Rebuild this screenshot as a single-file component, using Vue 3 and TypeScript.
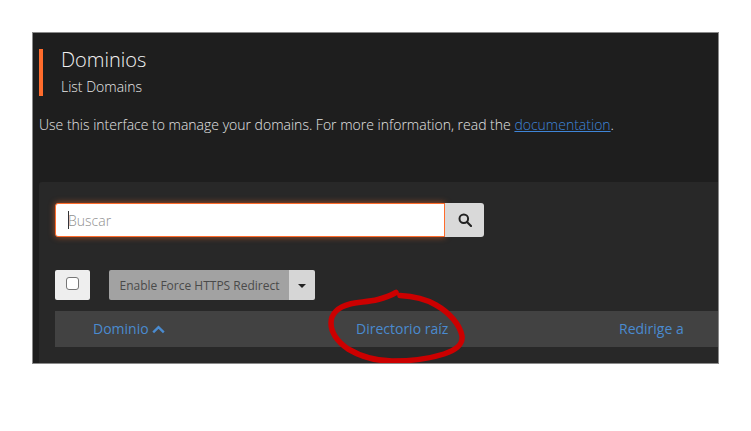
<script setup lang="ts">
const columns: { label: string; sorted?: boolean }[] = [
  { label: 'Dominio', sorted: true },
  { label: 'Directorio raíz' },
  { label: 'Redirige a' },
]
</script>

<template>
  <div class="page">
    <div class="frame">
      <header class="heading">
        <h1 class="title">Dominios</h1>
        <p class="subtitle">List Domains</p>
      </header>
      <p class="intro">
        Use this interface to manage your domains. For more information, read the
        <a class="doc-link">documentation</a>.
      </p>
      <section class="panel">
        <div class="search">
          <div class="search-input">
            <span class="caret"></span>
            <span class="placeholder">Buscar</span>
          </div>
          <button class="search-btn" aria-label="Buscar">
            <svg width="14" height="14" viewBox="0 0 14 14" fill="none">
              <circle cx="5.8" cy="5.8" r="4.3" stroke="#222" stroke-width="2" />
              <path d="M9 9l4 4" stroke="#222" stroke-width="2.2" stroke-linecap="round" />
            </svg>
          </button>
        </div>
        <div class="actions">
          <div class="check-btn"><span class="check"></span></div>
          <div class="split">
            <span class="split-main">Enable Force HTTPS Redirect</span>
            <span class="split-caret"><i class="tri"></i></span>
          </div>
        </div>
        <div class="thead">
          <div v-for="c in columns" :key="c.label" class="th">
            <span>{{ c.label }}</span>
            <svg v-if="c.sorted" class="chev" width="13" height="9" viewBox="0 0 13 9" fill="none">
              <path d="M1.2 7.4L6.5 2.2l5.300 5.200" stroke="#4a8bd0" stroke-width="2.4" />
            </svg>
          </div>
        </div>
      </section>
      <svg class="scribble" width="687" height="332" viewBox="32 32 687 332" fill="none">
        <path
          d="M396 292.500C390 296 384 298 378 299.500C368 302 358 302 350 304C338 307 331 314 331 323C331 333 338 342 348 349C360 356 376 361 392 361C410 361 428 359 444 354C456 350 463 345 462 336C460 325 450 313 436 305C424 298 412 296 400 295.500"
          stroke="#cc0000"
          stroke-width="5.500"
          stroke-linecap="round"
        />
      </svg>
    </div>
  </div>
</template>

<style>
html,
body {
  margin: 0;
  background: #fff;
}
</style>

<style scoped>
.page {
  width: 751px;
  height: 431px;
  padding: 32px 0 0 32px;
  box-sizing: border-box;
  background: #fff;
  overflow: hidden;
  font-family: "Open Sans", "Liberation Sans", sans-serif;
}
.frame {
  position: relative;
  width: 687px;
  height: 332px;
  box-sizing: border-box;
  border: 1px solid #8a8a8a;
  background: #1e1e1e;
  padding: 16px 0 0 6px;
  overflow: hidden;
  color: #e8e8e8;
}
.heading {
  height: 47px;
  border-left: 4px solid #ff6c2c;
  padding-left: 18px;
  box-sizing: border-box;
}
.title {
  margin: 0;
  font-size: 20px;
  font-weight: 300;
  line-height: 22px;
  color: #f2f2f2;
}
.subtitle {
  margin: 7px 0 0;
  font-size: 14px;
  font-weight: 300;
  line-height: 18px;
}
.intro {
  margin: 19px 0 0;
  font-size: 14px;
  font-weight: 300;
  line-height: 20px;
  color: #e4e4e4;
}
.doc-link {
  color: #3f85d8;
  text-decoration: underline;
}
.panel {
  margin-top: 47px;
  height: 200px;
  background: #282828;
  border-radius: 3px 0 0 0;
  padding: 21px 0 0 16px;
}
.search {
  display: flex;
  width: 429px;
  height: 34px;
}
.search-input {
  flex: 1;
  display: flex;
  align-items: center;
  box-sizing: border-box;
  background: #fff;
  border: 1px solid #ff6c2c;
  border-radius: 3px 0 0 3px;
  box-shadow: 0 0 6px rgba(255, 108, 44, 0.6);
  padding-left: 12px;
}
.caret {
  width: 1px;
  height: 18px;
  background: #333;
}
.placeholder {
  font-size: 14px;
  font-weight: 300;
  color: #8f8f8f;
  margin-left: -1px;
}
.search-btn {
  width: 39px;
  border: 0;
  padding: 0;
  background: #d9d9d9;
  border-radius: 0 3px 3px 0;
  display: flex;
  align-items: center;
  justify-content: center;
}
.actions {
  display: flex;
  gap: 19px;
  margin-top: 33px;
  height: 30px;
}
.check-btn {
  width: 35px;
  height: 30px;
  background: #eee;
  border-radius: 2px;
  display: flex;
  align-items: center;
  justify-content: center;
}
.check {
  width: 13px;
  height: 13px;
  box-sizing: border-box;
  background: #fff;
  border: 1px solid #767676;
  border-radius: 3px;
  margin-top: -4px;
}
.split {
  display: flex;
  width: 206px;
  height: 30px;
  border-radius: 2px;
  overflow: hidden;
}
.split-main {
  width: 180px;
  padding-left: 1px;
  box-sizing: border-box;
  background: #a2a2a2;
  color: #4a4a4a;
  font-size: 12px;
  line-height: 31px;
  text-align: center;
}
.split-caret {
  flex: 1;
  background: #d6d6d6;
  display: flex;
  align-items: center;
  justify-content: center;
  padding-top: 2px;
  box-sizing: border-box;
}
.tri {
  display: block;
  border-left: 4px solid transparent;
  border-right: 4px solid transparent;
  border-top: 4px solid #222;
}
.thead {
  display: flex;
  margin-top: 11px;
  height: 36px;
  background: #424242;
  align-items: center;
  color: #4a8bd0;
  font-size: 14px;
  line-height: 34px;
}
.th {
  display: flex;
  align-items: center;
  gap: 3px;
  flex: none;
  white-space: nowrap;
}
.th:nth-child(1) {
  width: 301px;
  padding-left: 38px;
  box-sizing: border-box;
}
.th:nth-child(2) {
  width: 263px;
}
.scribble {
  position: absolute;
  left: -1px;
  top: -1px;
}
</style>
